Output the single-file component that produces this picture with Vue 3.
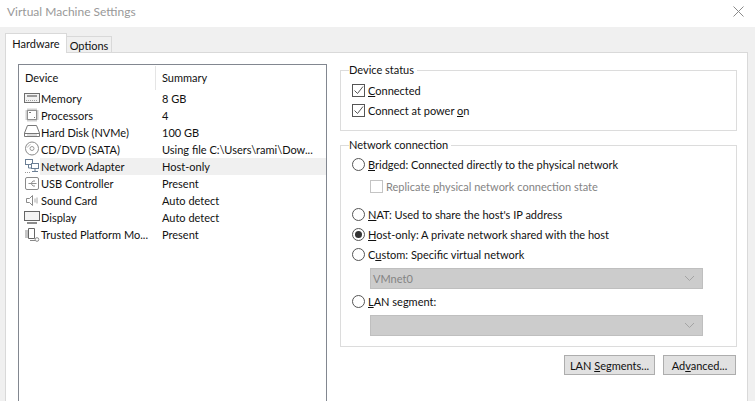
<script setup>
const rows = [
  { id: 'mem', name: 'Memory', value: '8 GB' },
  { id: 'cpu', name: 'Processors', value: '4' },
  { id: 'hdd', name: 'Hard Disk (NVMe)', value: '100 GB' },
  { id: 'cd', name: 'CD/DVD (SATA)', value: 'Using file C:\\Users\\rami\\Dow...' },
  { id: 'net', name: 'Network Adapter', value: 'Host-only', active: true },
  { id: 'usb', name: 'USB Controller', value: 'Present' },
  { id: 'snd', name: 'Sound Card', value: 'Auto detect' },
  { id: 'dsp', name: 'Display', value: 'Auto detect' },
  { id: 'tpm', name: 'Trusted Platform Mo...', value: 'Present' }
]
</script>

<template>
  <div class="win">
    <div class="title">
      <span>Virtual Machine Settings</span>
      <svg class="close" width="11" height="11" viewBox="0 0 11 11"><path d="M.5.5l10 10M10.500.5l-10 10" stroke="#8a8a8a" fill="none"/></svg>
    </div>
    <div class="tabs">
      <div class="tab on">Hardware</div>
      <div class="tab">Options</div>
    </div>
    <div class="pane">
      <div class="list">
        <div class="head">
          <span class="c1">Device</span>
          <span class="c2">Summary</span>
        </div>
        <div v-for="r in rows" :key="r.id" class="row">
          <span class="ico">
            <svg width="17" height="17" viewBox="0 0 17 17" fill="none" stroke="#6f6f6f">
              <template v-if="r.id === 'mem'">
                <rect x=".5" y="3.500" width="15" height="9" fill="#f2f2f2"/>
                <path d="M3 6h10" stroke="#9a9a9a" stroke-width="2"/>
                <path d="M2 10.500h12" stroke="#a0a0a0" stroke-dasharray="1 1"/>
              </template>
              <template v-else-if="r.id === 'cpu'">
                <rect x="3.500" y="3.500" width="9" height="9" stroke="#8a8a8a"/>
                <path d="M4 1.500v2M6 1.500v2M8 1.500v2M10 1.500v2M12 1.500v2M4 12.500v2M6 12.500v2M8 12.500v2M10 12.500v2M12 12.500v2M1.500 4h2M1.500 6h2M1.500 8h2M1.500 10h2M1.500 12h2M12.500 4h2M12.500 6h2M12.500 8h2M12.500 10h2M12.500 12h2" stroke="#a0a0a0"/>
                <path d="M5 5h2v1H5zM10 10h1v1h-1z" fill="#777" stroke="none"/>
              </template>
              <template v-else-if="r.id === 'hdd'">
                <path d="M3.500 1.500h9l3 7.500v3.500H.5V9z" stroke="#777"/>
                <path d="M1 9.500h14" stroke="#777"/>
                <path d="M3 11h10" stroke="#bbb"/>
              </template>
              <template v-else-if="r.id === 'cd'">
                <circle cx="8" cy="7.500" r="6.500" stroke="#8a8a8a"/>
                <circle cx="8" cy="7.500" r="2" stroke="#999"/>
                <path d="M3.500 6.500a5 5 0 0 1 3-3" stroke="#bbb"/>
              </template>
              <template v-else-if="r.id === 'net'">
                <rect x="1.500" y="1.500" width="7" height="5" stroke="#6b7f95"/>
                <rect x="7.500" y="5.500" width="7" height="5" stroke="#6b7f95" fill="#fff"/>
                <path d="M4.500 7v3h3M11 11v2M8 13.500h6" stroke="#6b7f95"/>
                <path d="M1 14.500h6" stroke="#9a9a9a" stroke-dasharray="1 1"/>
              </template>
              <template v-else-if="r.id === 'usb'">
                <rect x="1.500" y="2.500" width="13" height="12" rx="1.500" stroke="#8a8a8a"/>
                <path d="M4.500 8.500h8M7 8.500l2-2.500h2M7 8.500l2 2.500h2" stroke="#8f8f8f"/>
              </template>
              <template v-else-if="r.id === 'snd'">
                <path d="M2.500 6.500h3l3-3v10l-3-3h-3z" stroke="#8a8a8a"/>
                <path d="M11 6.500v4M13 5.500v6" stroke="#a8a8a8"/>
              </template>
              <template v-else-if="r.id === 'dsp'">
                <rect x=".5" y="2.500" width="15" height="9" stroke="#666" fill="#f4f4f4"/>
                <path d="M3 14h10" stroke="#666" stroke-width="1.500"/>
              </template>
              <template v-else>
                <path d="M4.500 2.500h6v10h-6z" stroke="#666"/>
                <path d="M1 5h3M1 7h3M1 9h3M1 11h3" stroke="#8a8a8a"/>
                <path d="M6 14.500h5" stroke="#888"/>
                <circle cx="13" cy="13.500" r="1.800" stroke="#888"/>
              </template>
            </svg>
          </span>
          <span class="name" :class="{ active: r.active }">{{ r.name }}</span>
          <span class="val" :class="{ active: r.active }">{{ r.value }}</span>
        </div>
      </div>

      <div class="side">
        <fieldset class="group g1">
          <legend>Device status</legend>
          <label class="opt">
            <span class="chk"><svg width="11" height="11" viewBox="0 0 11 11"><path d="M1.500 5.500l3 3 5.500-7" stroke="#555" fill="none"/></svg></span>
            <span><u>C</u>onnected</span>
          </label>
          <label class="opt">
            <span class="chk"><svg width="11" height="11" viewBox="0 0 11 11"><path d="M1.500 5.500l3 3 5.500-7" stroke="#555" fill="none"/></svg></span>
            <span>Connect at power <u>o</u>n</span>
          </label>
        </fieldset>

        <fieldset class="group g2">
          <legend>Network connection</legend>
          <label class="opt"><span class="rad"></span><span><u>B</u>ridged: Connected directly to the physical network</span></label>
          <label class="opt sub off"><span class="chk dim"></span><span>Replicate <u>p</u>hysical network connection state</span></label>
          <label class="opt mt"><span class="rad"></span><span><u>N</u>AT: Used to share the host's IP address</span></label>
          <label class="opt"><span class="rad sel"></span><span><u>H</u>ost-only: A private network shared with the host</span></label>
          <label class="opt"><span class="rad"></span><span>C<u>u</u>stom: Specific virtual network</span></label>
          <div class="sel-box"><span>VMnet0</span><svg width="11" height="7" viewBox="0 0 11 7"><path d="M1 1l4.500 4.500L10 1" stroke="#a4a4a4" fill="none"/></svg></div>
          <label class="opt lan"><span class="rad"></span><span><u>L</u>AN segment:</span></label>
          <div class="sel-box second"><span></span><svg width="11" height="7" viewBox="0 0 11 7"><path d="M1 1l4.500 4.500L10 1" stroke="#a4a4a4" fill="none"/></svg></div>
        </fieldset>

        <div class="btns">
          <button class="btn seg">LAN <u>S</u>egments...</button>
          <button class="btn adv">Ad<u>v</u>anced...</button>
        </div>
      </div>
    </div>
  </div>
</template>

<style>
html, body { margin: 0; background: #f0f0f0; }
</style>

<style scoped>
.win {
  width: 755px;
  height: 401px;
  overflow: hidden;
  background: #f0f0f0;
  font: 11px/15px Lato, "Open Sans", sans-serif;
  color: #111;
}
.title {
  height: 27px;
  background: #fff;
  display: flex;
  align-items: center;
  justify-content: space-between;
  padding: 0 11px 5px 7px;
  box-sizing: border-box;
  color: #999;
  font-size: 12px;
}
.tabs {
  display: flex;
  align-items: flex-end;
  height: 26px;
  padding-left: 5px;
  position: relative;
  z-index: 1;
  margin-bottom: -1px;
}
.tab {
  height: 17px;
  width: 45px;
  text-align: center;
  border: 1px solid #d9d9d9;
  border-left: 0;
  line-height: 17px;
  box-sizing: border-box;
}
.tab.on {
  height: 20px;
  width: 62px;
  background: #fff;
  border-left: 1px solid #d9d9d9;
  border-bottom: 0;
  line-height: 19px;
}
.pane {
  margin: 0 7px 0 5px;
  height: 360px;
  box-sizing: border-box;
  border: 1px solid #d9d9d9;
  background: #fff;
  padding: 11px 9px 0 12px;
  display: flex;
  gap: 13px;
}
.list {
  width: 309px;
  height: 360px;
  box-sizing: border-box;
  border: 1px solid #828790;
  flex: none;
}
.head {
  display: flex;
  height: 25px;
  align-items: center;
}
.c1 { width: 137px; padding-left: 6px; box-sizing: border-box; border-right: 1px solid #e5e5e5; line-height: 24px; }
.c2 { padding-left: 6px; }
.row {
  display: flex;
  height: 17px;
  align-items: center;
}
.ico { width: 21px; padding-left: 5px; box-sizing: border-box; flex: none; display: flex; height: 17px; }
.ico svg { flex: none; }
.name { width: 122px; padding-left: 1px; height: 17px; line-height: 17px; white-space: nowrap; flex: none; box-sizing: border-box; }
.val { flex: 1; height: 17px; line-height: 17px; white-space: nowrap; }
.active { background: #f0f0f0; }
.side { width: 397px; flex: none; }
.group {
  margin: 0;
  padding: 0 0 0 11px;
  border: 1px solid #dcdcdc;
  box-sizing: border-box;
  min-width: 0;
}
.group legend { padding: 0 3px 0 0; margin-left: -3px; line-height: 14px; height: 14px; }
.g1 { height: 68px; margin-top: -1px; padding-top: 3px; }
.g2 { height: 209px; margin-top: 7px; padding-top: 2px; }
.opt { display: flex; align-items: center; height: 20px; gap: 3px; }
.chk {
  width: 11px; height: 11px; border: 1px solid #555; background: #fff;
  display: inline-flex; flex: none;
}
.chk.dim { border-color: #c4c4c4; }
.rad {
  width: 11px; height: 11px; border: 1px solid #555; border-radius: 50%;
  flex: none; position: relative; background: #fff;
}
.rad.sel::after {
  content: ""; position: absolute; left: 2px; top: 2px; width: 7px; height: 7px;
  border-radius: 50%; background: #333;
}
.sub { margin-left: 18px; height: 24px; }
.off { color: #848484; }
.mt { margin-top: 6px; }
.lan { margin-top: 2px; }
.sel-box {
  margin: 4px 0 0 18px;
  width: 333px;
  height: 21px;
  box-sizing: border-box;
  background: #ccc;
  border: 1px solid #bfbfbf;
  display: flex;
  align-items: center;
  justify-content: space-between;
  padding: 0 7px 0 2px;
  color: #848484;
}
.second { margin-top: 4px; }
.btns { display: flex; justify-content: flex-end; gap: 8px; margin-top: 8px; padding-right: 1px; }
.btn {
  height: 20px;
  padding: 0;
  border: 1px solid #adadad;
  background: #e1e1e1;
  font: inherit;
  color: #111;
  box-sizing: border-box;
}
.seg { width: 91px; }
.adv { width: 73px; }
</style>
